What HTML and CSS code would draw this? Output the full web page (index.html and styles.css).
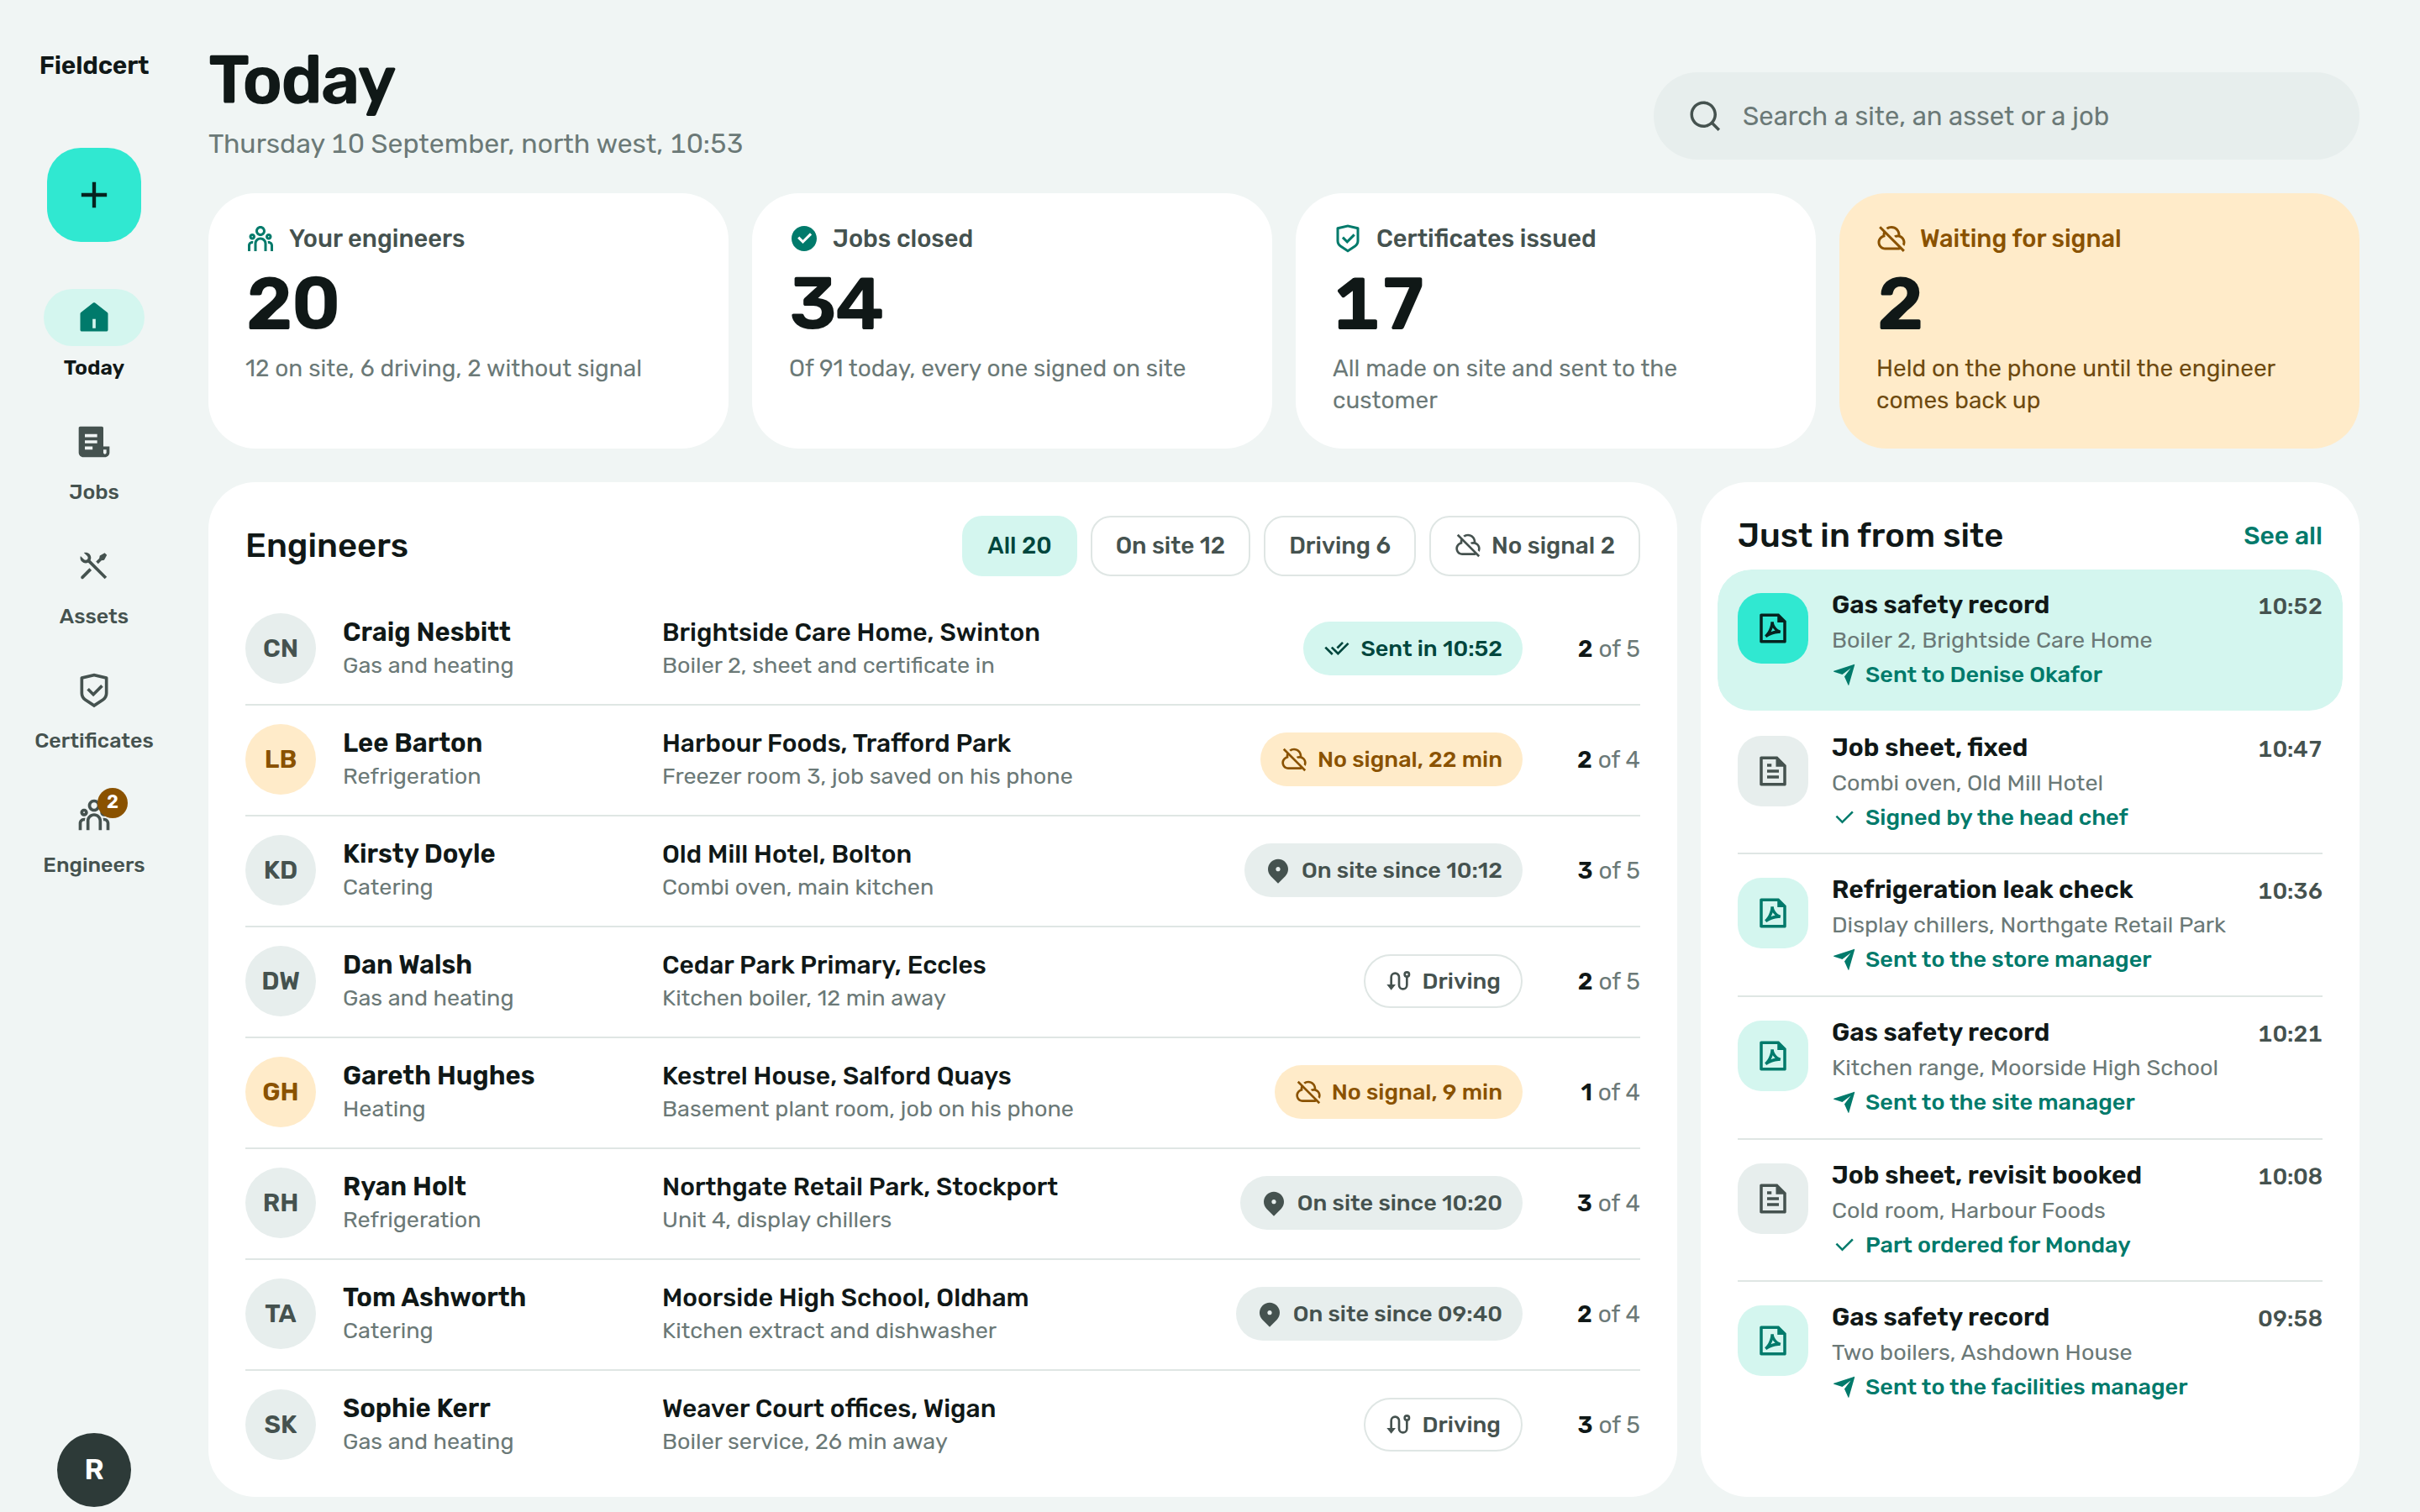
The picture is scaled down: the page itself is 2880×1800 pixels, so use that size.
FILE: index.html
```html
<!DOCTYPE html>
<html lang="en">
<head>
    <meta charset="UTF-8">
    <meta name="viewport" content="width=device-width, initial-scale=1.0">
    <title>Fieldcert - Today</title>
    <link rel="stylesheet" href="styles.css">
</head>
<body>
    <!-- Icon set -->
    <svg class="icon-defs" xmlns="http://www.w3.org/2000/svg">
        <symbol id="i-add" viewBox="0 0 24 24"><path d="M11 11V5H13V11H19V13H13V19H11V13H5V11H11Z"/></symbol>
        <symbol id="i-home" viewBox="0 0 24 24"><path d="M21 20C21 20.5523 20.5523 21 20 21H4C3.4477 21 3 20.5523 3 20V9.48907C3 9.18048 3.14247 8.88917 3.38606 8.69972L11.3861 2.47749C11.7472 2.19663 12.2528 2.19663 12.6139 2.47749L20.6139 8.69972C20.8575 8.88917 21 9.18048 21 9.48907V20ZM11 13V19H13V13H11Z"/></symbol>
        <symbol id="i-jobs" viewBox="0 0 24 24"><path d="M19 22H5C3.34315 22 2 20.6569 2 19V3C2 2.44772 2.44772 2 3 2H17C17.5523 2 18 2.44772 18 3V15H22V19C22 20.6569 20.6569 22 19 22ZM18 17V19C18 19.5523 18.4477 20 19 20C19.5523 20 20 19.5523 20 19V17H18ZM6 7V9H14V7H6ZM6 11V13H14V11H6ZM6 15V17H11V15H6Z"/></symbol>
        <symbol id="i-tools" viewBox="0 0 24 24"><path d="M5.32943 3.27158C6.56252 2.8332 7.9923 3.10749 8.97927 4.09446C10.1002 5.21537 10.3019 6.90741 9.5843 8.23385L20.293 18.9437L18.8788 20.3579L8.16982 9.64875C6.84325 10.3669 5.15069 10.1654 4.02952 9.04421C3.04227 8.05696 2.7681 6.62665 3.20701 5.39332L5.44373 7.63C6.02952 8.21578 6.97927 8.21578 7.56505 7.63C8.15084 7.04421 8.15084 6.09446 7.56505 5.50868L5.32943 3.27158ZM15.6968 5.15512L18.8788 3.38736L20.293 4.80157L18.5252 7.98355L16.7574 8.3371L14.6361 10.4584L13.2219 9.04421L15.3432 6.92289L15.6968 5.15512ZM8.97927 13.2868L10.3935 14.7011L5.09018 20.0044C4.69966 20.3949 4.06649 20.3949 3.67597 20.0044C3.31334 19.6417 3.28744 19.0699 3.59826 18.6774L3.67597 18.5902L8.97927 13.2868Z"/></symbol>
        <symbol id="i-shield" viewBox="0 0 24 24"><path d="M12 1L20.2169 2.82598C20.6745 2.92766 21 3.33347 21 3.80217V13.7889C21 15.795 19.9974 17.6684 18.3282 18.7812L12 23L5.6718 18.7812C4.00261 17.6684 3 15.795 3 13.7889V3.80217C3 3.33347 3.32553 2.92766 3.78307 2.82598L12 1ZM12 3.04879L5 4.60434V13.7889C5 15.1263 5.6684 16.3752 6.7812 17.1171L12 20.5963L17.2188 17.1171C18.3316 16.3752 19 15.1263 19 13.7889V4.60434L12 3.04879ZM16.4524 8.22183L17.8666 9.63604L11.5026 16L7.25999 11.7574L8.67421 10.3431L11.5019 13.1709L16.4524 8.22183Z"/></symbol>
        <symbol id="i-team" viewBox="0 0 24 24"><path d="M12 11C14.7614 11 17 13.2386 17 16V22H15V16C15 14.4023 13.7511 13.0963 12.1763 13.0051L12 13C10.4023 13 9.09634 14.2489 9.00509 15.8237L9 16V22H7V16C7 13.2386 9.23858 11 12 11ZM5.5 14C5.77885 14 6.05009 14.0326 6.3101 14.0942C6.14202 14.594 6.03873 15.122 6.00896 15.6693L6 16L6.0007 16.0856C5.88757 16.0456 5.76821 16.0187 5.64446 16.0069L5.5 16C4.7203 16 4.07955 16.5949 4.00687 17.3555L4 17.5V22H2V17.5C2 15.567 3.567 14 5.5 14ZM18.5 14C20.433 14 22 15.567 22 17.5V22H20V17.5C20 16.7203 19.4051 16.0796 18.6445 16.0069L18.5 16C18.3248 16 18.1566 16.03 18.0003 16.0852L18 16C18 15.3343 17.8916 14.694 17.6915 14.0956C17.9499 14.0326 18.2211 14 18.5 14ZM5.5 8C6.88071 8 8 9.11929 8 10.5C8 11.8807 6.88071 13 5.5 13C4.11929 13 3 11.8807 3 10.5C3 9.11929 4.11929 8 5.5 8ZM18.5 8C19.8807 8 21 9.11929 21 10.5C21 11.8807 19.8807 13 18.5 13C17.1193 13 16 11.8807 16 10.5C16 9.11929 17.1193 8 18.5 8ZM5.5 10C5.22386 10 5 10.2239 5 10.5C5 10.7761 5.22386 11 5.5 11C5.77614 11 6 10.7761 6 10.5C6 10.2239 5.77614 10 5.5 10ZM18.5 10C18.2239 10 18 10.2239 18 10.5C18 10.7761 18.2239 11 18.5 11C18.7761 11 19 10.7761 19 10.5C19 10.2239 18.7761 10 18.5 10ZM12 2C14.2091 2 16 3.79086 16 6C16 8.20914 14.2091 10 12 10C9.79086 10 8 8.20914 8 6C8 3.79086 9.79086 2 12 2ZM12 4C10.8954 4 10 4.89543 10 6C10 7.10457 10.8954 8 12 8C13.1046 8 14 7.10457 14 6C14 4.89543 13.1046 4 12 4Z"/></symbol>
        <symbol id="i-search" viewBox="0 0 24 24"><path d="M18.031 16.6168L22.3137 20.8995L20.8995 22.3137L16.6168 18.031C15.0769 19.263 13.124 20 11 20C6.032 20 2 15.968 2 11C2 6.032 6.032 2 11 2C15.968 2 20 6.032 20 11C20 13.124 19.263 15.0769 18.031 16.6168ZM16.0247 15.8748C17.2475 14.6146 18 12.8956 18 11C18 7.1325 14.8675 4 11 4C7.1325 4 4 7.1325 4 11C4 14.8675 7.1325 18 11 18C12.8956 18 14.6146 17.2475 15.8748 16.0247L16.0247 15.8748Z"/></symbol>
        <symbol id="i-done" viewBox="0 0 24 24"><path fill-rule="evenodd" d="M12 22C6.47715 22 2 17.5228 2 12C2 6.47715 6.47715 2 12 2C17.5228 2 22 6.47715 22 12C22 17.5228 17.5228 22 12 22ZM11.0026 16L18.0737 8.92893L16.6595 7.51472L11.0026 13.1716L8.17421 10.3431L6.75999 11.7574L11.0026 16Z"/></symbol>
        <symbol id="i-cloud-off" viewBox="0 0 24 24"><path d="M3.51472 2.10051L22.6066 21.1924L21.1924 22.6066L19.1782 20.5924C18.503 20.8556 17.7684 21 17 21H7C3.68629 21 1 18.3137 1 15C1 12.3846 2.67346 10.1602 5.00804 9.33857C5.0027 9.22639 5 9.11351 5 9C5 8.22228 5.12683 7.47418 5.36094 6.77527L2.10051 3.51472L3.51472 2.10051ZM7 9C7 9.08147 7.00193 9.16263 7.00578 9.24344L7.07662 10.7309L5.67183 11.2252C4.0844 11.7839 3 13.3 3 15C3 17.2091 4.79086 19 7 19H17C17.1858 19 17.3687 18.9873 17.5478 18.9628L7.03043 8.44519C7.01032 8.62736 7 8.81247 7 9ZM12 2C15.866 2 19 5.13401 19 9C19 9.11351 18.9973 9.22639 18.9919 9.33857C21.3265 10.1602 23 12.3846 23 15C23 16.0883 22.7103 17.1089 22.2037 17.9889L20.7111 16.4955C20.8974 16.0335 21 15.5287 21 15C21 12.79 19.21 11 17 11C16.4711 11 15.9661 11.1027 15.5039 11.2892L14.0111 9.7964C14.8912 9.28978 15.9118 9 17 9C17 6.23858 14.7614 4 12 4C10.9295 4 9.93766 4.33639 9.12428 4.90922L7.69418 3.48056C8.88169 2.55284 10.3763 2 12 2Z"/></symbol>
        <symbol id="i-check" viewBox="0 0 24 24"><path d="M9.9997 15.1709L19.1921 5.97852L20.6063 7.39273L9.9997 17.9993L3.63574 11.6354L5.04996 10.2212L9.9997 15.1709Z"/></symbol>
        <symbol id="i-double" viewBox="0 0 24 24"><path d="M11.602 13.7599L13.014 15.1719L21.4795 6.7063L22.8938 8.12051L13.014 18.0003L6.65 11.6363L8.06421 10.2221L10.189 12.3469L11.6025 13.7594L11.602 13.7599ZM11.6037 10.9322L16.5563 5.97949L17.9666 7.38977L13.014 12.3424L11.6037 10.9322ZM8.77698 16.5873L7.36396 18.0003L1 11.6363L2.41421 10.2221L3.82723 11.6352L3.82604 11.6363L8.77698 16.5873Z"/></symbol>
        <symbol id="i-pin" viewBox="0 0 24 24"><path d="M18.364 17.364L12 23.7279L5.63604 17.364C2.12132 13.8492 2.12132 8.15076 5.63604 4.63604C9.15076 1.12132 14.8492 1.12132 18.364 4.63604C21.8787 8.15076 21.8787 13.8492 18.364 17.364ZM12 13C13.1046 13 14 12.1046 14 11C14 9.89543 13.1046 9 12 9C10.8954 9 10 9.89543 10 11C10 12.1046 10.8954 13 12 13Z"/></symbol>
        <symbol id="i-route" viewBox="0 0 24 24"><path fill="none" stroke="currentColor" stroke-width="2" d="M5 16V8.5a3.5 3.5 0 0 1 7 0v7a3.5 3.5 0 0 0 7 0V8"/><circle cx="19" cy="6" r="2" fill="none" stroke="currentColor" stroke-width="2"/><path d="M1 15H9L5 20Z"/></symbol>
        <symbol id="i-pdf" viewBox="0 0 24 24"><path d="M5 4H15V8H19V20H5V4ZM3.9985 2C3.44749 2 3 2.44405 3 2.9918V21.0082C3 21.5447 3.44476 22 3.9934 22H20.0066C20.5551 22 21 21.5489 21 20.9925L20.9997 7L16 2H3.9985ZM10.4999 7.5C10.4999 9.07749 10.0442 10.9373 9.27493 12.6534C8.50287 14.3757 7.46143 15.8502 6.37524 16.7191L7.55464 18.3321C10.4821 16.3804 13.7233 15.0421 16.8585 15.49L17.3162 13.5513C14.6435 12.6604 12.4999 9.98994 12.4999 7.5H10.4999ZM11.0999 13.4716C11.3673 12.8752 11.6042 12.2563 11.8037 11.6285C12.2753 12.3531 12.8553 13.0182 13.5101 13.5953C12.5283 13.7711 11.5665 14.0596 10.6352 14.4276C10.7999 14.1143 10.9551 13.7948 11.0999 13.4716Z"/></symbol>
        <symbol id="i-sheet" viewBox="0 0 24 24"><path d="M21 8V20.9932C21 21.5501 20.5552 22 20.0066 22H3.9934C3.44495 22 3 21.556 3 21.0082V2.9918C3 2.45531 3.4487 2 4.00221 2H14.9968L21 8ZM19 9H14V4H5V20H19V9ZM8 7H11V9H8V7ZM8 11H16V13H8V11ZM8 15H16V17H8V15Z"/></symbol>
        <symbol id="i-send" viewBox="0 0 24 24"><path d="M1.94607 9.31543C1.42353 9.14125 1.4194 8.86022 1.95682 8.68108L21.043 2.31901C21.5715 2.14285 21.8746 2.43866 21.7265 2.95694L16.2733 22.0432C16.1223 22.5716 15.8177 22.59 15.5944 22.0876L11.9999 14L17.9999 6.00005L9.99992 12L1.94607 9.31543Z"/></symbol>
    </svg>

    <div class="app">
        <!-- Left rail -->
        <aside class="rail">
            <div class="logo">Fieldcert</div>
            <button class="add-btn"><svg><use href="#i-add"/></svg></button>
            <nav class="nav">
                <a class="nav-item active"><span class="nav-icon"><svg><use href="#i-home"/></svg></span>Today</a>
                <a class="nav-item"><span class="nav-icon"><svg><use href="#i-jobs"/></svg></span>Jobs</a>
                <a class="nav-item"><span class="nav-icon"><svg><use href="#i-tools"/></svg></span>Assets</a>
                <a class="nav-item"><span class="nav-icon"><svg><use href="#i-shield"/></svg></span>Certificates</a>
                <a class="nav-item"><span class="nav-icon"><svg><use href="#i-team"/></svg><b class="badge">2</b></span>Engineers</a>
            </nav>
            <div class="me">R</div>
        </aside>

        <main class="main">
            <header class="header">
                <div>
                    <h1>Today</h1>
                    <p class="date">Thursday 10 September, north west, 10:53</p>
                </div>
                <div class="search"><svg><use href="#i-search"/></svg>Search a site, an asset or a job</div>
            </header>

            <!-- Stat cards -->
            <section class="stats">
                <div class="stat">
                    <div class="stat-label"><svg><use href="#i-team"/></svg>Your engineers</div>
                    <div class="stat-num">20</div>
                    <p>12 on site, 6 driving, 2 without signal</p>
                </div>
                <div class="stat">
                    <div class="stat-label"><svg><use href="#i-done"/></svg>Jobs closed</div>
                    <div class="stat-num">34</div>
                    <p>Of 91 today, every one signed on site</p>
                </div>
                <div class="stat">
                    <div class="stat-label"><svg><use href="#i-shield"/></svg>Certificates issued</div>
                    <div class="stat-num">17</div>
                    <p>All made on site and sent to the customer</p>
                </div>
                <div class="stat warn">
                    <div class="stat-label"><svg><use href="#i-cloud-off"/></svg>Waiting for signal</div>
                    <div class="stat-num">2</div>
                    <p>Held on the phone until the engineer comes back up</p>
                </div>
            </section>

            <div class="panels">
                <!-- Engineers list -->
                <section class="panel engineers">
                    <div class="panel-head">
                        <h2>Engineers</h2>
                        <div class="chips">
                            <button class="chip on">All 20</button>
                            <button class="chip">On site 12</button>
                            <button class="chip">Driving 6</button>
                            <button class="chip"><svg><use href="#i-cloud-off"/></svg>No signal 2</button>
                        </div>
                    </div>
                    <div class="rows">
                        <div class="row">
                            <div class="avatar">CN</div>
                            <div class="who"><strong>Craig Nesbitt</strong><span>Gas and heating</span></div>
                            <div class="where"><strong>Brightside Care Home, Swinton</strong><span>Boiler 2, sheet and certificate in</span></div>
                            <div class="pill sent"><svg><use href="#i-double"/></svg>Sent in 10:52</div>
                            <div class="count"><b>2</b> of 5</div>
                        </div>
                        <div class="row">
                            <div class="avatar warn">LB</div>
                            <div class="who"><strong>Lee Barton</strong><span>Refrigeration</span></div>
                            <div class="where"><strong>Harbour Foods, Trafford Park</strong><span>Freezer room 3, job saved on his phone</span></div>
                            <div class="pill lost"><svg><use href="#i-cloud-off"/></svg>No signal, 22 min</div>
                            <div class="count"><b>2</b> of 4</div>
                        </div>
                        <div class="row">
                            <div class="avatar">KD</div>
                            <div class="who"><strong>Kirsty Doyle</strong><span>Catering</span></div>
                            <div class="where"><strong>Old Mill Hotel, Bolton</strong><span>Combi oven, main kitchen</span></div>
                            <div class="pill"><svg><use href="#i-pin"/></svg>On site since 10:12</div>
                            <div class="count"><b>3</b> of 5</div>
                        </div>
                        <div class="row">
                            <div class="avatar">DW</div>
                            <div class="who"><strong>Dan Walsh</strong><span>Gas and heating</span></div>
                            <div class="where"><strong>Cedar Park Primary, Eccles</strong><span>Kitchen boiler, 12 min away</span></div>
                            <div class="pill driving"><svg><use href="#i-route"/></svg>Driving</div>
                            <div class="count"><b>2</b> of 5</div>
                        </div>
                        <div class="row">
                            <div class="avatar warn">GH</div>
                            <div class="who"><strong>Gareth Hughes</strong><span>Heating</span></div>
                            <div class="where"><strong>Kestrel House, Salford Quays</strong><span>Basement plant room, job on his phone</span></div>
                            <div class="pill lost"><svg><use href="#i-cloud-off"/></svg>No signal, 9 min</div>
                            <div class="count"><b>1</b> of 4</div>
                        </div>
                        <div class="row">
                            <div class="avatar">RH</div>
                            <div class="who"><strong>Ryan Holt</strong><span>Refrigeration</span></div>
                            <div class="where"><strong>Northgate Retail Park, Stockport</strong><span>Unit 4, display chillers</span></div>
                            <div class="pill"><svg><use href="#i-pin"/></svg>On site since 10:20</div>
                            <div class="count"><b>3</b> of 4</div>
                        </div>
                        <div class="row">
                            <div class="avatar">TA</div>
                            <div class="who"><strong>Tom Ashworth</strong><span>Catering</span></div>
                            <div class="where"><strong>Moorside High School, Oldham</strong><span>Kitchen extract and dishwasher</span></div>
                            <div class="pill"><svg><use href="#i-pin"/></svg>On site since 09:40</div>
                            <div class="count"><b>2</b> of 4</div>
                        </div>
                        <div class="row">
                            <div class="avatar">SK</div>
                            <div class="who"><strong>Sophie Kerr</strong><span>Gas and heating</span></div>
                            <div class="where"><strong>Weaver Court offices, Wigan</strong><span>Boiler service, 26 min away</span></div>
                            <div class="pill driving"><svg><use href="#i-route"/></svg>Driving</div>
                            <div class="count"><b>3</b> of 5</div>
                        </div>
                    </div>
                </section>

                <!-- Incoming documents -->
                <section class="panel feed">
                    <div class="feed-head">
                        <h2>Just in from site</h2>
                        <a>See all</a>
                    </div>
                    <div class="item new">
                        <div class="thumb"><svg><use href="#i-pdf"/></svg></div>
                        <div class="doc"><strong>Gas safety record</strong><span>Boiler 2, Brightside Care Home</span><em><svg><use href="#i-send"/></svg>Sent to Denise Okafor</em></div>
                        <time>10:52</time>
                    </div>
                    <div class="item">
                        <div class="thumb sheet"><svg><use href="#i-sheet"/></svg></div>
                        <div class="doc"><strong>Job sheet, fixed</strong><span>Combi oven, Old Mill Hotel</span><em><svg><use href="#i-check"/></svg>Signed by the head chef</em></div>
                        <time>10:47</time>
                    </div>
                    <div class="item">
                        <div class="thumb"><svg><use href="#i-pdf"/></svg></div>
                        <div class="doc"><strong>Refrigeration leak check</strong><span>Display chillers, Northgate Retail Park</span><em><svg><use href="#i-send"/></svg>Sent to the store manager</em></div>
                        <time>10:36</time>
                    </div>
                    <div class="item">
                        <div class="thumb"><svg><use href="#i-pdf"/></svg></div>
                        <div class="doc"><strong>Gas safety record</strong><span>Kitchen range, Moorside High School</span><em><svg><use href="#i-send"/></svg>Sent to the site manager</em></div>
                        <time>10:21</time>
                    </div>
                    <div class="item">
                        <div class="thumb sheet"><svg><use href="#i-sheet"/></svg></div>
                        <div class="doc"><strong>Job sheet, revisit booked</strong><span>Cold room, Harbour Foods</span><em><svg><use href="#i-check"/></svg>Part ordered for Monday</em></div>
                        <time>10:08</time>
                    </div>
                    <div class="item">
                        <div class="thumb"><svg><use href="#i-pdf"/></svg></div>
                        <div class="doc"><strong>Gas safety record</strong><span>Two boilers, Ashdown House</span><em><svg><use href="#i-send"/></svg>Sent to the facilities manager</em></div>
                        <time>09:58</time>
                    </div>
                </section>
            </div>
        </main>
    </div>
</body>
</html>
```
FILE: styles.css
```css
* {
    box-sizing: border-box;
    margin: 0;
    padding: 0;
}

body {
    height: 1800px;
    background: #f0f5f4;
    color: #101817;
    font-family: Rubik, Roboto, sans-serif;
    font-size: 28px;
    overflow: hidden;
}

button {
    font: inherit;
    border: none;
}

svg {
    display: block;
    flex: none;
    fill: currentColor;
}

.icon-defs {
    display: none;
}

.app {
    display: flex;
    height: 1800px;
}

/* Left rail */
.rail {
    width: 224px;
    display: flex;
    flex-direction: column;
    align-items: center;
    padding: 60px 0 6px;
}

.logo {
    height: 36px;
    line-height: 36px;
    font-size: 30px;
    font-weight: 600;
    letter-spacing: -0.2px;
}

.add-btn {
    width: 112px;
    height: 112px;
    margin-top: 80px;
    border-radius: 40px;
    background: #30e8d1;
    color: #06231f;
    display: grid;
    place-items: center;
}

.add-btn svg {
    width: 52px;
    height: 52px;
}

.nav {
    margin-top: 56px;
    display: flex;
    flex-direction: column;
    gap: 36px;
}

.nav-item {
    height: 112px;
    display: flex;
    flex-direction: column;
    align-items: center;
    gap: 10px;
    font-size: 25px;
    line-height: 32px;
    font-weight: 500;
    color: #45524f;
}

.nav-icon {
    position: relative;
    width: 120px;
    height: 68px;
    border-radius: 34px;
    display: grid;
    place-items: center;
}

.nav-icon svg {
    width: 44px;
    height: 44px;
}

.nav-item.active {
    color: #101817;
    font-weight: 600;
}

.active .nav-icon {
    background: #d4f6ef;
    color: #007a6b;
}

.badge {
    position: absolute;
    top: 2px;
    left: 64px;
    width: 36px;
    height: 36px;
    border-radius: 50%;
    background: #8a5200;
    color: #fff;
    font-size: 22px;
    line-height: 34px;
    font-weight: 600;
    text-align: center;
}

.me {
    width: 88px;
    height: 88px;
    margin-top: auto;
    border-radius: 50%;
    background: #2d3a38;
    color: #fff;
    font-size: 34px;
    line-height: 88px;
    font-weight: 600;
    text-align: center;
}

/* Main column */
.main {
    width: 2584px;
    padding: 48px 0 18px 24px;
    display: flex;
    flex-direction: column;
}

.header {
    height: 142px;
    display: flex;
    justify-content: space-between;
    align-items: flex-end;
}

h1 {
    font-size: 80px;
    line-height: 88px;
    font-weight: 600;
    letter-spacing: -2px;
}

.date {
    margin-top: 12px;
    font-size: 32px;
    line-height: 38px;
    color: #6b7977;
    font-variant-numeric: tabular-nums;
}

.search {
    width: 840px;
    height: 104px;
    border-radius: 52px;
    padding: 0 40px;
    display: flex;
    align-items: center;
    gap: 24px;
    background: #e7eeed;
    color: #6b7977;
    font-size: 31px;
}

.search svg {
    width: 42px;
    height: 42px;
    color: #45524f;
}

/* Stat cards */
.stats {
    margin-top: 40px;
    display: grid;
    grid-template-columns: repeat(4, 1fr);
    gap: 28px;
}

.stat {
    height: 304px;
    padding: 36px 44px;
    border-radius: 56px;
    background: #fff;
}

.stat-label {
    height: 36px;
    display: flex;
    align-items: center;
    gap: 16px;
    color: #45524f;
    font-size: 29px;
    font-weight: 500;
}

.stat-label svg {
    width: 36px;
    height: 36px;
    color: #007a6b;
}

.stat-num {
    margin-top: 16px;
    font-size: 88px;
    line-height: 88px;
    font-weight: 600;
    letter-spacing: -1.8px;
    font-variant-numeric: tabular-nums;
}

.stat p {
    margin-top: 14px;
    color: #6b7977;
    font-size: 28px;
    line-height: 38px;
}

.stat.warn {
    background: #ffebc9;
}

.warn .stat-label,
.warn .stat-label svg {
    color: #8a5200;
}

.stat.warn p {
    color: #6e4a10;
}

/* Panels */
.panels {
    margin-top: 40px;
    flex: 1;
    display: grid;
    grid-template-columns: 1fr 784px;
    gap: 28px;
}

.panel {
    border-radius: 56px;
    background: #fff;
    padding: 40px 44px 0;
}

h2 {
    font-size: 40px;
    line-height: 48px;
    font-weight: 500;
}

.panel-head {
    height: 72px;
    display: flex;
    align-items: center;
    justify-content: space-between;
}

.chips {
    display: flex;
    gap: 16px;
}

.chip {
    height: 72px;
    padding: 0 28px 2px;
    border: 2px solid #dfe6e4;
    border-radius: 24px;
    background: #fff;
    color: #45524f;
    font-size: 28px;
    font-weight: 500;
    display: flex;
    align-items: center;
    gap: 12px;
}

.chip svg {
    width: 32px;
    height: 32px;
}

.chip.on {
    border-color: #d4f6ef;
    background: #d4f6ef;
    color: #00463d;
}

.rows {
    margin-top: 22px;
}

.row {
    height: 132px;
    padding-bottom: 2px;
    display: grid;
    grid-template-columns: 84px 348px 1fr auto 108px;
    column-gap: 32px;
    align-items: center;
    border-bottom: 2px solid #dfe6e4;
}

.row:last-child {
    border-bottom-color: transparent;
}

.avatar {
    width: 84px;
    height: 84px;
    border-radius: 50%;
    background: #e7eeed;
    color: #45524f;
    font-size: 30px;
    line-height: 84px;
    font-weight: 600;
    text-align: center;
}

.avatar.warn {
    background: #ffebc9;
    color: #8a5200;
}

.row strong,
.row span {
    display: block;
    white-space: nowrap;
}

.row strong {
    font-size: 30px;
    line-height: 40px;
    font-weight: 500;
}

.row .who strong {
    font-size: 31px;
    font-weight: 600;
}

.row span {
    font-size: 27px;
    line-height: 38px;
    color: #6b7977;
}

.pill {
    height: 64px;
    padding: 0 24px;
    border-radius: 32px;
    background: #e7eeed;
    color: #45524f;
    font-size: 27px;
    font-weight: 500;
    display: flex;
    align-items: center;
    gap: 12px;
}

.pill svg {
    width: 32px;
    height: 32px;
}

.pill.sent {
    background: #d4f6ef;
    color: #00463d;
}

.pill.lost {
    background: #ffebc9;
    color: #8a5200;
}

.pill.driving {
    border: 2px solid #dfe6e4;
    background: #fff;
}

.count {
    text-align: right;
    font-size: 28px;
    color: #6b7977;
}

.count b {
    font-weight: 600;
    color: #101817;
}

/* Feed */
.feed-head {
    height: 48px;
    margin-bottom: 16px;
    display: flex;
    align-items: center;
    justify-content: space-between;
}

.feed-head a {
    color: #007a6b;
    font-size: 30px;
    font-weight: 500;
}

.item {
    height: 169.7px;
    padding-top: 28px;
    display: flex;
    border-bottom: 2px solid #dfe6e4;
}

.item:last-child {
    border-bottom: none;
}

.item.new {
    margin: 0 -24px;
    padding: 28px 24px 0;
    border-bottom-color: transparent;
    border-radius: 40px;
    background: #d4f6ef;
    background-clip: padding-box;
}

.thumb {
    width: 84px;
    height: 84px;
    border-radius: 28px;
    background: #d4f6ef;
    color: #007a6b;
    display: grid;
    place-items: center;
}

.thumb svg {
    width: 42px;
    height: 42px;
}

.thumb.sheet {
    background: #e7eeed;
    color: #45524f;
}

.new .thumb {
    background: #30e8d1;
    color: #06231f;
}

.doc {
    flex: 1;
    margin: -7px 0 0 28px;
}

.doc strong,
.doc span {
    display: block;
    font-size: 30px;
    line-height: 42px;
    font-weight: 600;
}

.doc span {
    font-size: 27px;
    font-weight: 400;
    color: #6b7977;
}

.doc em {
    display: flex;
    align-items: center;
    gap: 10px;
    color: #007a6b;
    font-size: 27px;
    line-height: 40px;
    font-weight: 500;
    font-style: normal;
}

.doc em svg {
    width: 30px;
    height: 30px;
}

.item time {
    margin-top: -2px;
    color: #45524f;
    font-size: 27px;
    line-height: 36px;
    font-weight: 500;
    font-variant-numeric: tabular-nums;
}
```
